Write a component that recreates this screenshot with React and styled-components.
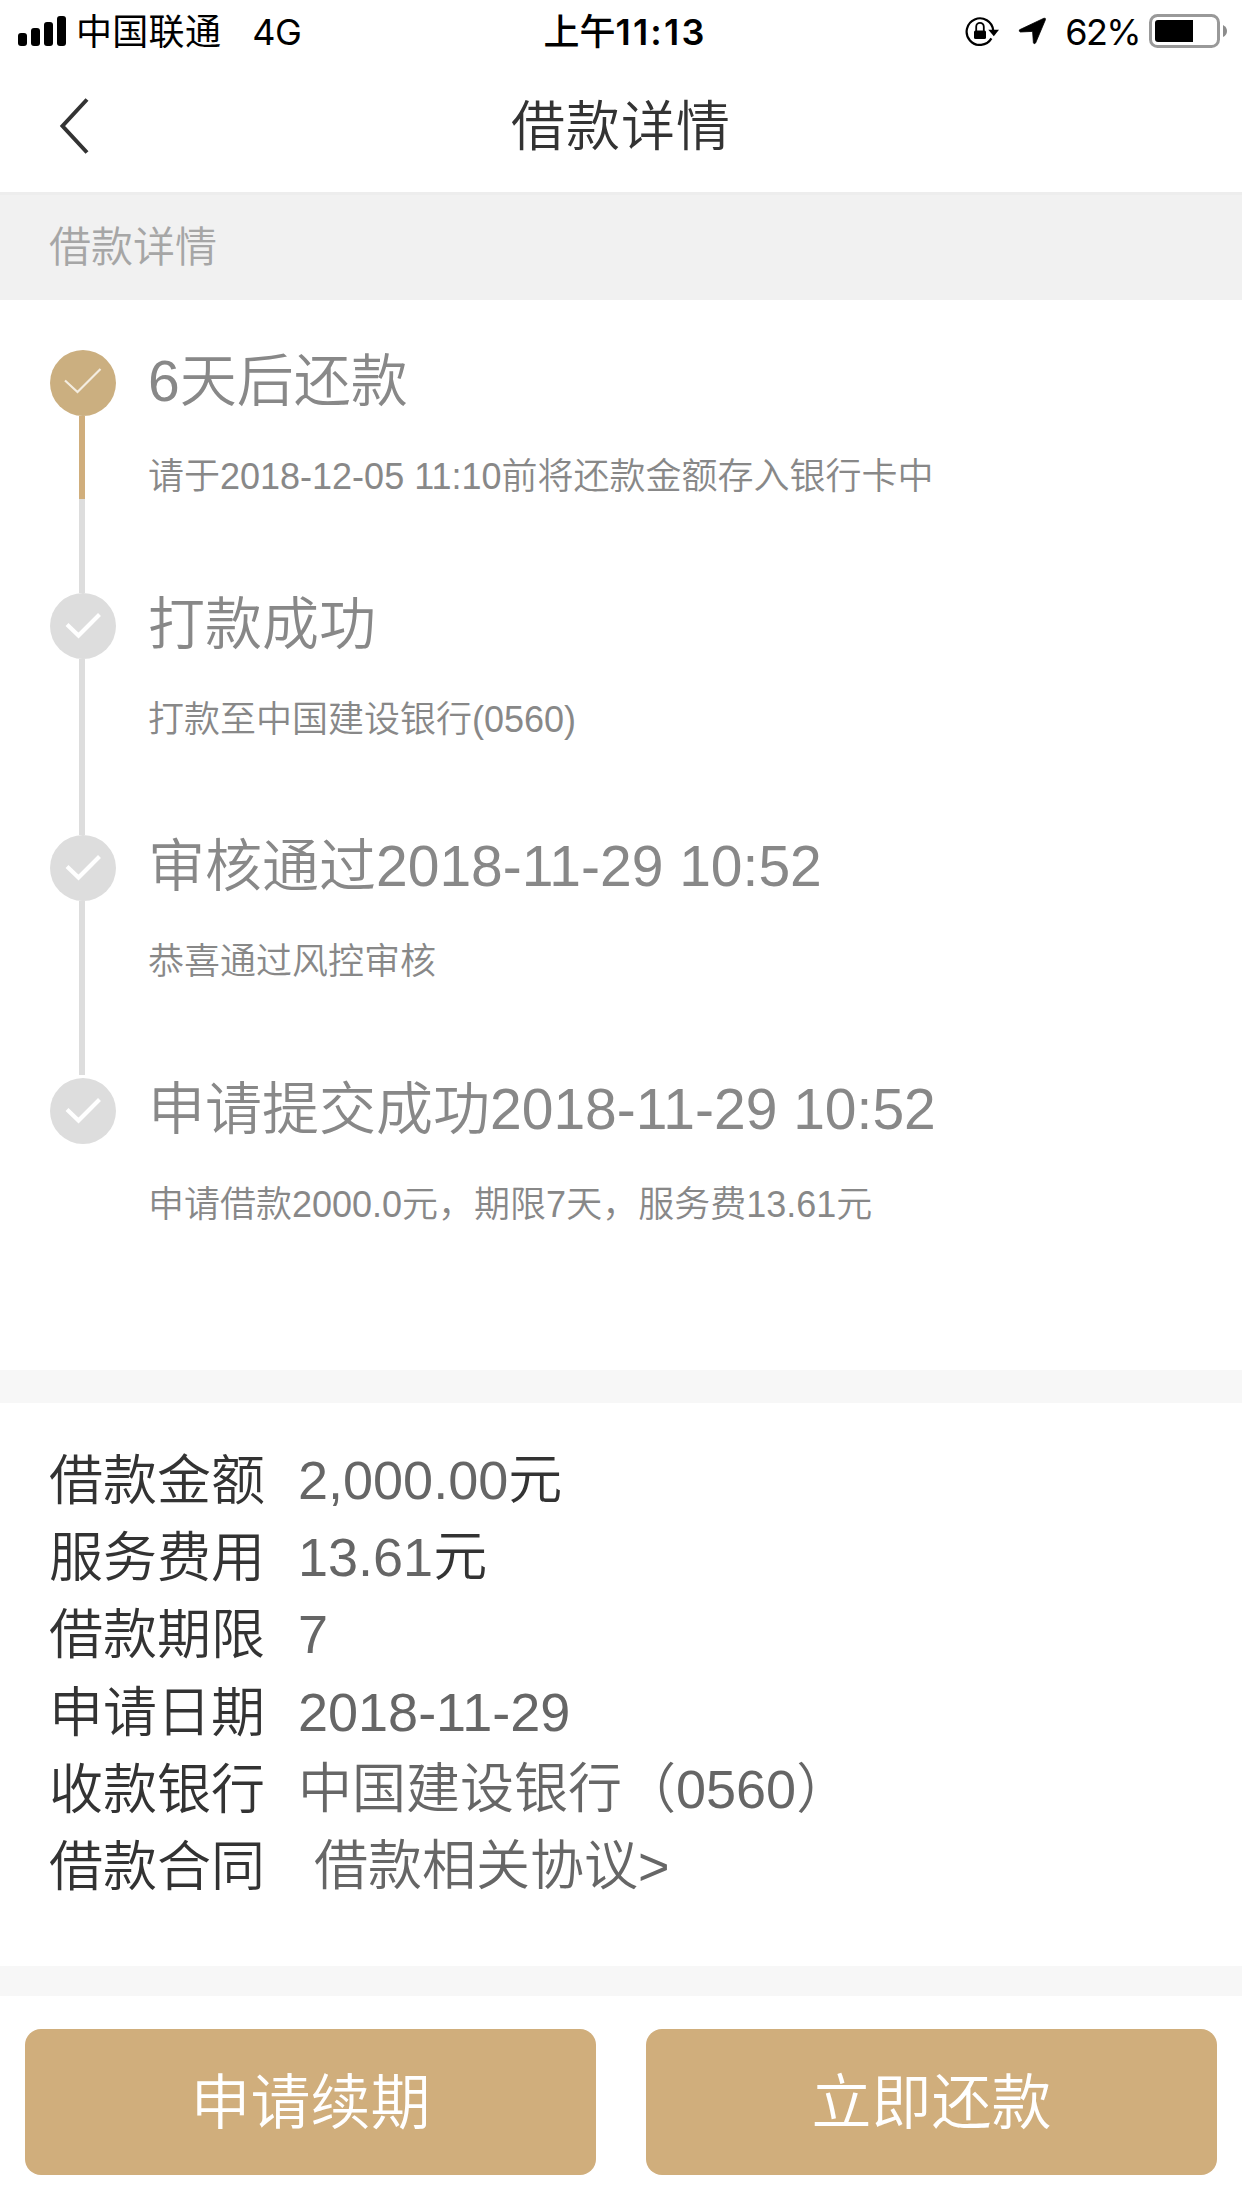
import React from 'react';
import styled, { createGlobalStyle } from 'styled-components';

const GlobalStyle = createGlobalStyle`
  * {
    box-sizing: border-box;
  }

  body {
    margin: 0;
    background: #fff;
    font-family: 'Liberation Sans', 'Noto Sans CJK SC', sans-serif;
    font-weight: 350;
  }
`;

const Page = styled.div`
  display: flex;
  flex-direction: column;
  width: 1242px;
  height: 2208px;
  overflow: hidden;
  background: #fff;
`;

const StatusBar = styled.div`
  display: grid;
  grid-template-columns: 1fr auto 1fr;
  align-items: center;
  height: 60px;
  padding: 0 14px 0 18px;
  color: #000;
  font-family: Inter, 'Noto Sans CJK SC', sans-serif;
  font-size: 36px;
  font-weight: 400;
  line-height: 60px;
  white-space: nowrap;
`;

const StatusLeft = styled.div`
  display: flex;
  align-items: center;
`;

const Carrier = styled.span`
  margin: 2px 0 0 9px;
  letter-spacing: 0.3px;
`;

const Network = styled.span`
  margin: 2px 0 0 31px;
  letter-spacing: -0.4px;
`;

const Clock = styled.div`
  margin: 1px 0 0 4px;
  font-weight: 600;
  letter-spacing: 2.2px;
`;

const ClockPrefix = styled.span`
  font-weight: 500;
  letter-spacing: 0;
`;

const StatusRight = styled.div`
  display: flex;
  align-items: center;
  justify-content: flex-end;
`;

const Percent = styled.span`
  margin: 1px 9px 0 18px;
  letter-spacing: -1.6px;
`;

const NavBar = styled.div`
  display: grid;
  grid-template-columns: 150px 1fr 150px;
  align-items: center;
  height: 132px;
`;

const BackButton = styled.button`
  display: flex;
  padding: 0 0 0 58px;
  border: none;
  background: none;
`;

const NavTitle = styled.h1`
  height: 132px;
  margin: 0;
  color: #333;
  font-size: 54px;
  font-weight: inherit;
  line-height: 134px;
  letter-spacing: 1px;
  text-align: center;
`;

const SectionTitle = styled.div`
  height: 108px;
  padding-left: 49px;
  border-top: 3px solid #ededed;
  background: #f1f1f1;
  color: #a6a6a6;
  font-size: 42px;
  line-height: 105px;
`;

const Timeline = styled.div`
  height: 1070px;
  padding: 50px 50px 0;
`;

const Step = styled.div`
  display: flex;
  height: 242.67px;
`;

const Rail = styled.div`
  display: flex;
  flex-direction: column;
  width: 66px;
`;

const Dot = styled.div`
  flex: none;
  display: flex;
  width: 66px;
  height: 66px;
  border-radius: 50%;
  background: ${(props) => (props.$active ? '#cbaf80' : '#ddd')};
`;

const Line = styled.div`
  flex: ${(props) => (props.$active ? '0 0 83px' : '1')};
  width: 6px;
  margin: 0 0 ${(props) => (props.$gap ? '3px' : '0')} 29px;
  background: ${(props) => (props.$active ? '#d0ae7c' : '#ddd')};
`;

const StepBody = styled.div`
  padding: 1px 0 0 32px;
  color: #888;
  white-space: nowrap;
`;

const StepTitle = styled.div`
  font-size: 57px;
  line-height: 60px;
`;

const StepText = styled.div`
  margin-top: 41px;
  font-size: 36px;
  line-height: 50px;
`;

const Divider = styled.div`
  flex: none;
  height: ${(props) => props.$height}px;
  background: #f7f7f7;
`;

const Details = styled.dl`
  height: 563px;
  margin: 0;
  padding: 39px 50px 0 49px;
`;

const DetailRow = styled.div`
  display: flex;
  height: 77.2px;
  color: #333;
  font-size: 54px;
  line-height: 77px;
  white-space: nowrap;
`;

const Label = styled.dt`
  width: 249px;
  padding-top: 1px;
`;

const Value = styled.dd`
  margin: 0;
  padding-left: ${(props) => (props.$link ? '16px' : '0')};
`;

const Amount = styled.span`
  color: #666;
`;

const Actions = styled.div`
  display: flex;
  gap: 50px;
  padding: 33px 25px;
`;

const ActionButton = styled.button`
  flex: 1;
  height: 146px;
  padding: 0 0 9px;
  border: none;
  border-radius: 16px;
  background: #d0ae7c;
  color: #fff;
  font-family: inherit;
  font-size: 60px;
  font-weight: inherit;
`;

const steps = [
  { title: '6天后还款', text: '请于2018-12-05 11:10前将还款金额存入银行卡中', active: true },
  { title: '打款成功', text: '打款至中国建设银行(0560)' },
  { title: '审核通过2018-11-29 10:52', text: '恭喜通过风控审核' },
  { title: '申请提交成功2018-11-29 10:52', text: '申请借款2000.0元，期限7天，服务费13.61元' },
];

const details = [
  { label: '借款金额', value: '2,000.00', unit: '元' },
  { label: '服务费用', value: '13.61', unit: '元' },
  { label: '借款期限', value: '7' },
  { label: '申请日期', value: '2018-11-29' },
  { label: '收款银行', value: '中国建设银行（0560）' },
  { label: '借款合同', value: '借款相关协议>', link: true },
];

const SignalIcon = () => (
  <svg width="49" height="30" viewBox="0 0 49 30">
    <rect x="0" y="17" width="9" height="13" rx="3" />
    <rect x="13" y="12" width="9" height="18" rx="3" />
    <rect x="26" y="6" width="9" height="24" rx="3" />
    <rect x="39" y="0" width="9" height="30" rx="3" />
  </svg>
);

const RotationLockIcon = () => (
  <svg width="34" height="30" viewBox="0 0 34 30">
    <path d="M26.4 22.4A13.3 13.3 0 1 1 28.2 14.5" fill="none" stroke="#000" strokeWidth="2.2" />
    <path d="M23.3 13.8H34L28.8 20.3Z" />
    <rect x="9" y="14.5" width="12" height="8.5" rx="1.5" />
    <path d="M11.2 15V10.8a3.8 4 0 0 1 7.6 0V15" fill="none" stroke="#000" strokeWidth="1.8" />
  </svg>
);

const ArrowSvg = styled.svg`
  margin-left: 19px;
`;

const LocationIcon = () => (
  <ArrowSvg width="29" height="28" viewBox="0 0 29 28">
    <path
      d="M1.5 12.8L26 1.2Q28 0.8 27.4 2.8L17.6 26Q16 27.6 15.4 25.8L14.6 14.4L2.4 15Q0.5 14.4 1.5 12.8Z"
      stroke="#000"
      strokeWidth="0.8"
      strokeLinejoin="round"
    />
  </ArrowSvg>
);

const BatteryIcon = () => (
  <svg width="79" height="34" viewBox="0 0 79 34">
    <rect x="1.5" y="1.5" width="68" height="31" rx="7" fill="none" stroke="#999" strokeWidth="3" />
    <path d="M9 6H44V28H9Q6 28 6 25V9Q6 6 9 6Z" />
    <path d="M74 11Q78 13 78 17Q78 21 74 23Z" fill="#8c8c8c" />
  </svg>
);

const CheckIcon = ({ active }) => (
  <svg width="66" height="66" viewBox="0 0 66 66" fill="none">
    {active ? (
      <path d="M15 30.5L27.5 42L50.5 19" stroke="#f4ede0" strokeWidth="2.2" />
    ) : (
      <path d="M17 31.5L28.5 42.5L49.5 21.5" stroke="#fff" strokeWidth="4.2" />
    )}
  </svg>
);

export default function App() {
  return (
    <Page>
      <GlobalStyle />
      <StatusBar>
        <StatusLeft>
          <SignalIcon />
          <Carrier>中国联通</Carrier>
          <Network>4G</Network>
        </StatusLeft>
        <Clock>
          <ClockPrefix>上午</ClockPrefix>11:13
        </Clock>
        <StatusRight>
          <RotationLockIcon />
          <LocationIcon />
          <Percent>62%</Percent>
          <BatteryIcon />
        </StatusRight>
      </StatusBar>

      <NavBar>
        <BackButton aria-label="返回">
          <svg width="34" height="58" viewBox="0 0 34 58" fill="none">
            <path d="M29 2.5L4.5 29L29 55.5" stroke="#333" strokeWidth="4" />
          </svg>
        </BackButton>
        <NavTitle>借款详情</NavTitle>
      </NavBar>

      <SectionTitle>借款详情</SectionTitle>

      <Timeline>
        {steps.map((step, index) => (
          <Step key={step.title}>
            <Rail>
              <Dot $active={step.active}>
                <CheckIcon active={step.active} />
              </Dot>
              {step.active && <Line $active />}
              {index < steps.length - 1 && <Line $gap={index === steps.length - 2} />}
            </Rail>
            <StepBody>
              <StepTitle>{step.title}</StepTitle>
              <StepText>{step.text}</StepText>
            </StepBody>
          </Step>
        ))}
      </Timeline>

      <Divider $height={33} />

      <Details>
        {details.map((item) => (
          <DetailRow key={item.label}>
            <Label>{item.label}</Label>
            <Value $link={item.link}>
              <Amount>{item.value}</Amount>
              {item.unit}
            </Value>
          </DetailRow>
        ))}
      </Details>

      <Divider $height={30} />

      <Actions>
        <ActionButton>申请续期</ActionButton>
        <ActionButton>立即还款</ActionButton>
      </Actions>
    </Page>
  );
}
